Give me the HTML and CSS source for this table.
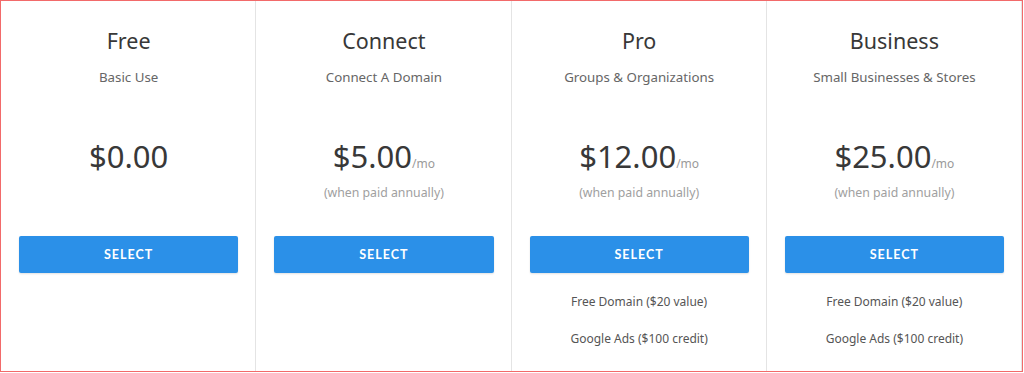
FILE: index.html
```html
<!DOCTYPE html>
<html>
<head>
<meta charset="utf-8">
<link rel="stylesheet" href="styles.css">
</head>
<body>
<div class="frame">
  <div class="plan">
    <h2 class="name">Free</h2>
    <p class="desc">Basic Use</p>
    <div class="price-block">
      <div class="price"><span class="amount">$0.00</span></div>
      <div class="note"></div>
    </div>
    <button class="select">SELECT</button>
  </div>
  <div class="plan">
    <h2 class="name">Connect</h2>
    <p class="desc">Connect A Domain</p>
    <div class="price-block">
      <div class="price"><span class="amount">$5.00</span><span class="per">/mo</span></div>
      <div class="note">(when paid annually)</div>
    </div>
    <button class="select">SELECT</button>
  </div>
  <div class="plan">
    <h2 class="name">Pro</h2>
    <p class="desc">Groups &amp; Organizations</p>
    <div class="price-block">
      <div class="price"><span class="amount">$12.00</span><span class="per">/mo</span></div>
      <div class="note">(when paid annually)</div>
    </div>
    <button class="select">SELECT</button>
    <ul class="features">
      <li>Free Domain ($20 value)</li>
      <li>Google Ads ($100 credit)</li>
    </ul>
  </div>
  <div class="plan">
    <h2 class="name">Business</h2>
    <p class="desc">Small Businesses &amp; Stores</p>
    <div class="price-block">
      <div class="price"><span class="amount">$25.00</span><span class="per">/mo</span></div>
      <div class="note">(when paid annually)</div>
    </div>
    <button class="select">SELECT</button>
    <ul class="features">
      <li>Free Domain ($20 value)</li>
      <li>Google Ads ($100 credit)</li>
    </ul>
  </div>
</div>
</body>
</html>
```

FILE: styles.css
```css
* { box-sizing: border-box; }
html, body { margin: 0; padding: 0; background: #fff; }
body {
  font-family: "Noto Sans", "Open Sans", sans-serif;
  width: 1024px;
  height: 373px;
  overflow: hidden;
}
.frame {
  display: flex;
  width: 1023px;
  height: 372px;
  border: 1px solid #f26a6a;
}
.plan {
  flex: 1;
  border-right: 1px solid #e4e4e4;
  padding: 0 17px 0 18px;
  display: flex;
  flex-direction: column;
  align-items: stretch;
  text-align: center;
}
.name {
  margin: 26px 0 0;
  font-size: 21.5px;
  font-weight: 400;
  line-height: 28px;
  color: #383838;
}
.desc {
  margin: 13px 0 0;
  font-size: 13.3px;
  line-height: 18px;
  color: #666;
}
.price-block {
  height: 150px;
  padding-top: 50px;
}
.price {
  line-height: 40px;
  color: #383838;
}
.amount { font-size: 31px; }
.per { font-size: 12px; color: #9a9a9a; }
.note {
  margin-top: 1px;
  font-size: 12.3px;
  line-height: 16px;
  color: #a0a0a0;
}
.select {
  height: 37px;
  margin: 0;
  border: none;
  border-radius: 2px;
  background: #2b90e8;
  color: #fff;
  font-family: "Lato", "Noto Sans", sans-serif;
  font-weight: 700;
  font-size: 12.5px;
  letter-spacing: 1px;
  box-shadow: 0 1px 2px rgba(0,0,0,0.12);
}
.features {
  list-style: none;
  margin: 20px 0 0;
  padding: 0;
}
.features li {
  font-size: 12px;
  line-height: 18px;
  color: #555;
  margin-bottom: 19px;
}
```
